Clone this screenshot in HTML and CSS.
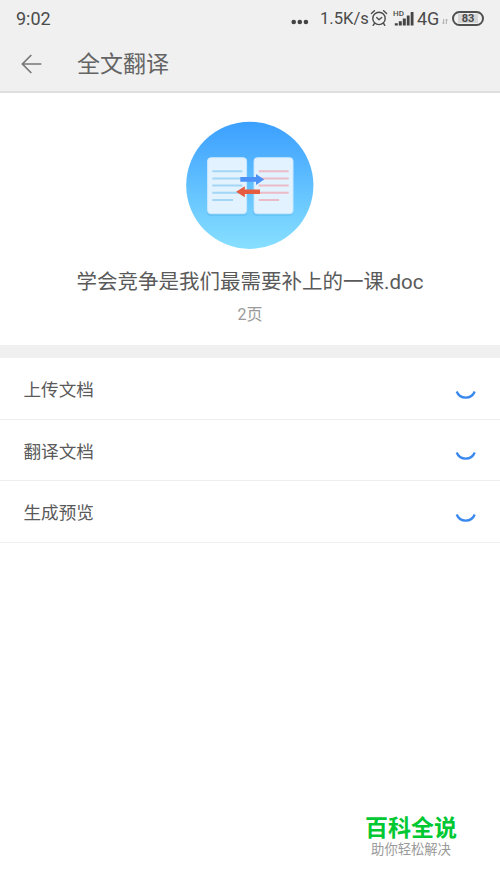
FILE: index.html
```html
<!DOCTYPE html>
<html lang="zh-CN">
<head>
<meta charset="utf-8">
<title>全文翻译</title>
<link rel="stylesheet" href="styles.css">
</head>
<body>
<header class="top">
  <div class="status">
    <span class="time">9:02</span>
    <div class="status-right">
      <svg class="dots" width="18" height="6" viewBox="0 0 18 6" fill="#444"><circle cx="2.7" cy="3" r="2.3"/><circle cx="8.8" cy="3" r="2.3"/><circle cx="14.9" cy="3" r="2.3"/></svg>
      <span class="speed">1.5K/s</span>
      <svg class="alarm" width="18" height="18" viewBox="0 0 18 18" fill="none" stroke="#4b4b4b" stroke-width="1.4" stroke-linecap="round" stroke-linejoin="round"><circle cx="9" cy="9.4" r="6.2"/><path d="M1.4 4.5 4.4 1.7M16.6 4.5l-3-2.8M6.7 8.6 9 10.7l2.7-2.2M4.4 14.5l-1.2 1.8M13.6 14.5l1.2 1.8"/></svg>
      <div class="signal">
        <span class="hd">HD</span>
        <svg width="20" height="15" viewBox="0 0 20 15" fill="#444"><path d="M.8 12.3h3v2.2h-3zM4.8 10.3h3v4.2h-3zM8.8 7.6h3v6.9h-3zM12.8 4.6h2.8v9.9h-2.8zM16.7 1h2.8v13.5h-2.8z"/></svg>
      </div>
      <span class="net">4G</span>
      <svg class="updown" width="6" height="7" viewBox="0 0 6 7" fill="none" stroke="#aaa" stroke-width="1"><path d="M1.7 1v5L.4 4.5M4.3 6V1l1.3 1.5"/></svg>
      <span class="battery"><span class="charge">83</span></span>
    </div>
  </div>
  <div class="bar">
    <svg width="21" height="20" viewBox="0 0 21 20" fill="none" stroke="#777" stroke-width="1.7"><path d="M10.3 1 1.4 10l8.9 9M1.5 10h18.8"/></svg>
    <h1>全文翻译</h1>
  </div>
</header>
<section class="file">
  <svg width="128" height="128" viewBox="0 0 128 128">
    <defs><linearGradient id="sky" x1="0" y1="0" x2="0" y2="1"><stop offset="0" stop-color="#3b9fff"/><stop offset="1" stop-color="#87e0ff"/></linearGradient></defs>
    <circle cx="63.8" cy="64.3" r="63.6" fill="url(#sky)"/>
    <g fill="#1679bd" opacity=".13"><rect x="21" y="38" width="40" height="57" rx="4"/><rect x="67" y="38" width="40" height="57" rx="4"/></g>
    <g fill="#e2f2fe" stroke="#c9e8ff"><rect x="21.6" y="36.7" width="39" height="56" rx="3.3"/><rect x="68" y="36.7" width="39" height="56" rx="3.3"/></g>
    <path d="M26.3 50.2h30M26.3 57.4h30M26.3 64.6h30M26.3 71.8h30M26.3 79h20.7" stroke="#a3d6f4" stroke-width="2"/>
    <path d="M72.7 50.2h30M72.7 57.4h30M72.7 64.6h30M72.7 71.8h30M72.7 79h20.5" stroke="#ebbbc7" stroke-width="2"/>
    <path d="M54.3 56.1H70v-3.2l8.2 5.5-8.2 5.5v-3.2H54.3z" fill="#4c91f5"/>
    <path d="M74 68.5H58.8v-3.3L50.1 70.7l8.7 5.6v-3.2H74z" fill="#e65c40"/>
  </svg>
  <div class="name">学会竞争是我们最需要补上的一课.doc</div>
  <div class="pages">2页</div>
</section>
<ul class="steps">
  <li><span>上传文档</span><svg width="22" height="22" viewBox="0 0 22 22"><path d="M1.7 13.5a9.65 9.65 0 0 0 18 0"/></svg></li>
  <li><span>翻译文档</span><svg width="22" height="22" viewBox="0 0 22 22"><path d="M1.7 13.5a9.65 9.65 0 0 0 18 0"/></svg></li>
  <li><span>生成预览</span><svg width="22" height="22" viewBox="0 0 22 22"><path d="M1.7 13.5a9.65 9.65 0 0 0 18 0"/></svg></li>
</ul>
<footer class="brand">
  <strong>百科全说</strong>
  <span>助你轻松解决</span>
</footer>
</body>
</html>
```
FILE: styles.css
```css
* { box-sizing: border-box; }
body {
  margin: 0;
  height: 888px;
  display: flex;
  flex-direction: column;
  background: #fff;
  color: #5a5a5a;
  font-family: Roboto, "Noto Sans CJK SC", sans-serif;
  overflow: hidden;
}
svg { display: block; flex: none; }
.top {
  flex: none;
  height: 93px;
  background: #f0f0f0;
  border-bottom: 2px solid #dfdfdf;
}
.status {
  height: 36px;
  padding: 0 16px;
  display: flex;
  align-items: center;
  justify-content: space-between;
  color: #4b4b4b;
}
.time { font-size: 18px; line-height: 36px; padding-top: 1px; }
.status-right { display: flex; align-items: center; height: 36px; }
.dots { margin: 7px 11px 0 0; }
.speed { width: 48px; font-size: 16.6px; padding-top: 1px; white-space: nowrap; }
.alarm { margin-left: 2px; }
.signal { position: relative; margin: 0 0 0 6px; }
.hd {
  position: absolute;
  left: -1px;
  top: -1px;
  font-size: 8px;
  line-height: 8px;
  font-weight: 500;
}
.net { width: 25px; margin-left: 3px; font-size: 18px; padding-top: 1px; }
.updown { margin: 6px 4px 0 0; }
.battery {
  width: 32px;
  height: 15px;
  padding: 1px 4px;
  border: 2px solid #505050;
  border-radius: 8px;
}
.charge {
  display: block;
  height: 9px;
  background: #d6d6d6;
  font-size: 11px;
  line-height: 10px;
  font-weight: 700;
  text-align: center;
}
.bar {
  height: 55px;
  padding-left: 21px;
  display: flex;
  align-items: center;
  gap: 35px;
}
.bar h1 {
  margin: 0;
  padding-top: 2px;
  font-size: 23px;
  line-height: 34px;
  font-weight: 400;
  color: #646464;
}
.file {
  flex: none;
  height: 265.4px;
  padding-top: 28px;
  border-bottom: 13px solid #f0f0f0;
  display: flex;
  flex-direction: column;
  align-items: center;
}
.name { margin-top: 18px; font-size: 20.5px; line-height: 30px; white-space: nowrap; }
.pages { margin-top: 6px; font-size: 16px; line-height: 24px; color: #9b9b9b; }
.steps { margin: 0; padding: 0; list-style: none; }
.steps li {
  height: 61.5px;
  padding: 0 23.5px;
  display: flex;
  align-items: center;
  justify-content: space-between;
  border-bottom: 1px solid #eee;
  font-size: 17.6px;
}
.steps path { fill: none; stroke: #3988ee; stroke-width: 2.3; }
.brand {
  margin: auto 43px 29px auto;
  width: 92px;
  display: flex;
  flex-direction: column;
  align-items: center;
  white-space: nowrap;
}
.brand strong { font-size: 23px; line-height: 26px; margin-bottom: -1px; color: #00c832; }
.brand span { font-size: 13.3px; line-height: 18px; color: #999; }
```
